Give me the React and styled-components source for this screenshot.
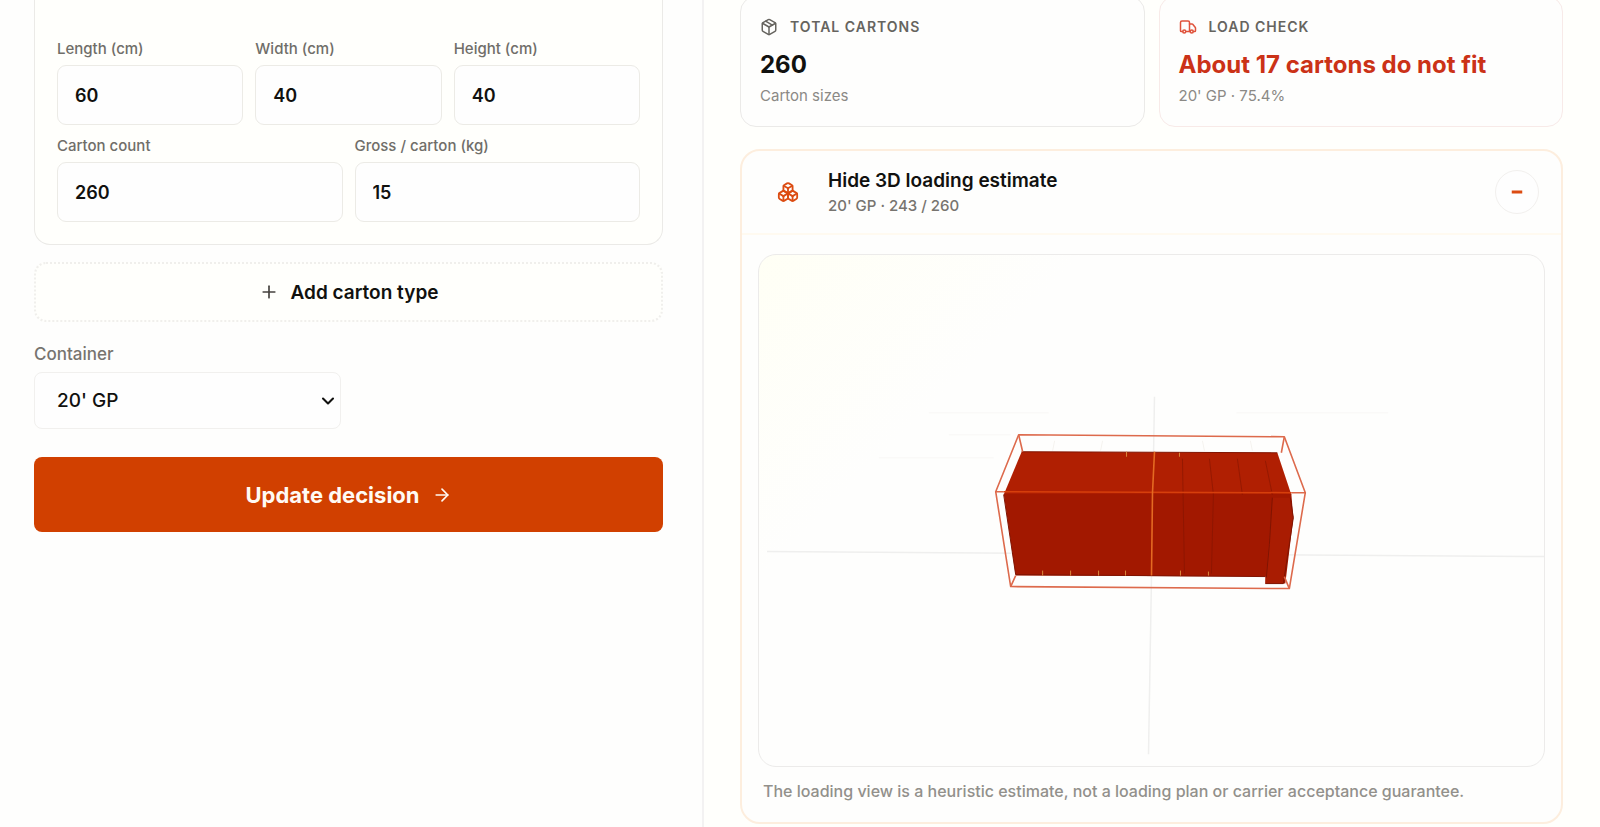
import React, { useState } from "react";
import styled, { createGlobalStyle } from "styled-components";
import { ArrowRight, Boxes, ChevronDown, Minus, Package, Plus, Truck } from "lucide-react";

const Global = createGlobalStyle`
  *, *::before, *::after { box-sizing: border-box; }
  body {
    margin: 0;
    background: #fefefc;
    color: #11110f;
    font-family: Inter, "Liberation Sans", sans-serif;
  }
  button, input, select { font: inherit; color: inherit; }
`;

const Page = styled.main`
  display: grid;
  grid-template-columns: 44fr 56fr;
  min-height: 100vh;
  overflow: hidden;
`;

const FormPane = styled.form`
  display: flex;
  flex-direction: column;
  padding: 0 39px 0 34px;
  background: #fefefd;
  border-right: 2px solid #f3f2f2;
`;

const CartonCard = styled.section`
  display: flex;
  flex-direction: column;
  gap: 12px;
  padding: 40px 22px 22px;
  background: #fffffc;
  border: 1px solid #ebeae7;
  border-top: 0;
  border-radius: 0 0 16px 16px;
`;

const FieldRow = styled.div`
  display: grid;
  grid-template-columns: repeat(${(p) => p.$columns}, 1fr);
  gap: 12px;
`;

const Field = styled.label`
  display: flex;
  flex-direction: column;
  gap: 8px;
  font-size: 15px;
  line-height: 17px;
  font-weight: 500;
  color: #706e69;
`;

const TextInput = styled.input`
  width: 100%;
  height: 60px;
  padding: 0 17px;
  background: #fefefe;
  border: 1px solid #ecebe6;
  border-radius: 9px;
  font-size: 18px;
  font-weight: 600;
  color: #11110f;
`;

const AddButton = styled.button`
  display: flex;
  align-items: center;
  justify-content: center;
  gap: 12px;
  height: 60px;
  margin-top: 17px;
  background: #fffffc;
  border: 2px dotted #f0efec;
  border-radius: 12px;
  font-size: 19px;
  font-weight: 600;
  svg { color: #45423e; }
`;

const ContainerField = styled.label`
  display: flex;
  flex-direction: column;
  gap: 8px;
  width: 307px;
  margin-top: 22px;
  font-size: 17px;
  line-height: 20px;
  font-weight: 500;
  color: #77746f;
`;

const SelectBox = styled.span`
  display: grid;
  align-items: center;
  > * { grid-area: 1 / 1; }
  svg {
    justify-self: end;
    margin-right: 3px;
    color: #11110f;
    pointer-events: none;
  }
`;

const Select = styled.select`
  appearance: none;
  width: 100%;
  height: 57px;
  padding: 0 22px;
  background: #fefefe;
  border: 1px solid #f1f0ee;
  border-radius: 8px;
  font-size: 19px;
  font-weight: 500;
  color: #11110f;
`;

const SubmitButton = styled.button`
  display: flex;
  align-items: center;
  justify-content: center;
  gap: 12px;
  height: 75px;
  margin-top: 28px;
  background: #d14000;
  border: 0;
  border-radius: 8px;
  font-size: 22px;
  font-weight: 700;
  color: #fffaf4;
`;

const ResultPane = styled.div`
  display: flex;
  flex-direction: column;
  gap: 22px;
  padding: 0 37px 4px 36px;
  background: #fffffc;
`;

const StatRow = styled.div`
  display: grid;
  grid-template-columns: 1fr 1fr;
  gap: 14px;
  margin-top: -4px;
`;

const StatCard = styled.section`
  display: flex;
  flex-direction: column;
  padding: 20px 19px;
  background: #fefefd;
  border: 1px solid ${(p) => (p.$alert ? "#f8eae8" : "#ebeae8")};
  border-radius: 16px;
`;

const StatHeading = styled.h2`
  display: flex;
  align-items: center;
  gap: 12px;
  margin: 0;
  font-size: 14px;
  line-height: 20px;
  font-weight: 600;
  letter-spacing: 1px;
  text-transform: uppercase;
  color: #66645f;
  svg { color: ${(p) => (p.$alert ? "#e0533c" : "#66645f")}; }
`;

const StatValue = styled.strong`
  margin-top: 11px;
  font-size: 24px;
  line-height: 34px;
  font-weight: 700;
  color: ${(p) => (p.$alert ? "#cb3217" : "#11110f")};
`;

const StatNote = styled.span`
  margin-top: 4px;
  font-size: 15px;
  line-height: 20px;
  color: #8b8985;
`;

const EstimatePanel = styled.section`
  display: flex;
  flex-direction: column;
  background: #fefefd;
  border: 2px solid #fdeede;
  border-radius: 20px;
`;

const PanelHeader = styled.header`
  display: flex;
  align-items: center;
  height: 84px;
  padding: 0 22px 0 35px;
  border-bottom: 2px solid #fffaf0;
  svg { color: #dc4c12; }
`;

const PanelTitles = styled.div`
  flex: 1;
  padding: 2px 0 0 29px;
`;

const PanelTitle = styled.h2`
  margin: 0;
  font-size: 19px;
  line-height: 26px;
  font-weight: 600;
`;

const PanelSubtitle = styled.p`
  margin: 0;
  font-size: 15px;
  line-height: 24px;
  font-weight: 500;
  color: #77746f;
`;

const RoundButton = styled.button`
  display: flex;
  align-items: center;
  justify-content: center;
  width: 44px;
  height: 44px;
  padding: 0;
  background: #fefefe;
  border: 1px solid #f2f0ee;
  border-radius: 50%;
`;

const PanelBody = styled.div`
  padding: 19px 16px;
`;

const Viewer = styled.figure`
  margin: 0;
  overflow: hidden;
  background: linear-gradient(135deg, #fffff5 0%, #fefefd 25%, #fefefd 100%);
  border: 1px solid #ecebea;
  border-radius: 18px;
  svg { display: block; width: 100%; height: auto; }
`;

const Disclaimer = styled.p`
  margin: 12px 0 0;
  padding: 0 5px;
  font-size: 16px;
  line-height: 24px;
  font-weight: 500;
  color: #92908b;
`;

function LoadingScene() {
  return (
    <svg viewBox="0 0 786 512" role="img" aria-label="Container loading view">
      <g fill="none" stroke="#efefee" strokeWidth="1.5">
        <path d="M8 297L786 302M396 142L390 500" />
        <path stroke="#faf9f8" d="M170 158H290M478 158H630M190 180H252M120 203H235" />
      </g>
      <g fill="none" stroke="#f5f3ef" strokeWidth="1">
        <path d="M296 186L294 196M344 186L342 196M444 186L446 196M492 186L494 196" />
      </g>
      <polygon fill="#b01f02" points="263,197 519,198 533,240 245,240" />
      <polygon fill="#a21800" points="245,239 533,239 535,263 527,329 507,329 507,322 257,321" />
      <polygon fill="#a91c02" points="514,243 532,243 535,263 525,329 507,329" />
      <g fill="none" stroke="#7f1402" strokeWidth="1">
        <path d="M263 197L519 198M257 320L507 322" />
        <path d="M424 204L426 319M451 204L455 240L453 319M479 204L484 240M507 206L514 240" opacity=".55" />
        <path d="M514 243L511 290L508 323M245 240L257 320M532 243L535 263L525 329H507" />
      </g>
      <g fill="none" stroke="#d98a3c" strokeWidth="1">
        <path d="M368 197V202M421 198V202M284 316V321M312 316V321M340 316V321M367 316V321M422 316V321M450 317V321" />
      </g>
      <g fill="none" stroke="#dd6a4c" strokeWidth="1.6" strokeLinejoin="round">
        <path d="M260 180L526 182L547 238L531 334L252 332L237 237Z" />
        <path d="M260 180L264 197M526 182L523 198M237 237H245M533 238H547M252 332L257 321M531 334L526 322" />
      </g>
      <path d="M245 237L533 238" fill="none" stroke="#d63f0c" strokeWidth="1.5" />
      <path d="M396 197L394 238L393 321" fill="none" stroke="#e46a22" strokeWidth="1.6" />
    </svg>
  );
}

function NumberField({ label, initial }) {
  const [value, setValue] = useState(initial);
  return (
    <Field>
      {label}
      <TextInput inputMode="numeric" value={value} onChange={(e) => setValue(e.target.value)} />
    </Field>
  );
}

export default function App() {
  return (
    <>
      <Global />
      <Page>
        <FormPane onSubmit={(e) => e.preventDefault()}>
          <CartonCard>
            <FieldRow $columns={3}>
              <NumberField label="Length (cm)" initial="60" />
              <NumberField label="Width (cm)" initial="40" />
              <NumberField label="Height (cm)" initial="40" />
            </FieldRow>
            <FieldRow $columns={2}>
              <NumberField label="Carton count" initial="260" />
              <NumberField label="Gross / carton (kg)" initial="15" />
            </FieldRow>
          </CartonCard>
          <AddButton type="button">
            <Plus size={20} strokeWidth={2} />
            Add carton type
          </AddButton>
          <ContainerField>
            Container
            <SelectBox>
              <Select defaultValue="20gp">
                <option value="20gp">20' GP</option>
              </Select>
              <ChevronDown size={20} strokeWidth={2.5} aria-hidden="true" />
            </SelectBox>
          </ContainerField>
          <SubmitButton type="submit">
            Update decision
            <ArrowRight size={20} strokeWidth={2} />
          </SubmitButton>
        </FormPane>
        <ResultPane>
          <StatRow>
            <StatCard>
              <StatHeading>
                <Package size={18} strokeWidth={2} />
                Total cartons
              </StatHeading>
              <StatValue>260</StatValue>
              <StatNote>Carton sizes</StatNote>
            </StatCard>
            <StatCard $alert>
              <StatHeading $alert>
                <Truck size={18} strokeWidth={2} />
                Load check
              </StatHeading>
              <StatValue $alert>About 17 cartons do not fit</StatValue>
              <StatNote>20' GP · 75.4%</StatNote>
            </StatCard>
          </StatRow>
          <EstimatePanel>
            <PanelHeader>
              <Boxes size={22} strokeWidth={2} />
              <PanelTitles>
                <PanelTitle>Hide 3D loading estimate</PanelTitle>
                <PanelSubtitle>20' GP · 243 / 260</PanelSubtitle>
              </PanelTitles>
              <RoundButton type="button" aria-label="Hide estimate">
                <Minus size={18} strokeWidth={4} strokeLinecap="butt" />
              </RoundButton>
            </PanelHeader>
            <PanelBody>
              <Viewer>
                <LoadingScene />
              </Viewer>
              <Disclaimer>
                The loading view is a heuristic estimate, not a loading plan or carrier acceptance guarantee.
              </Disclaimer>
            </PanelBody>
          </EstimatePanel>
        </ResultPane>
      </Page>
    </>
  );
}
